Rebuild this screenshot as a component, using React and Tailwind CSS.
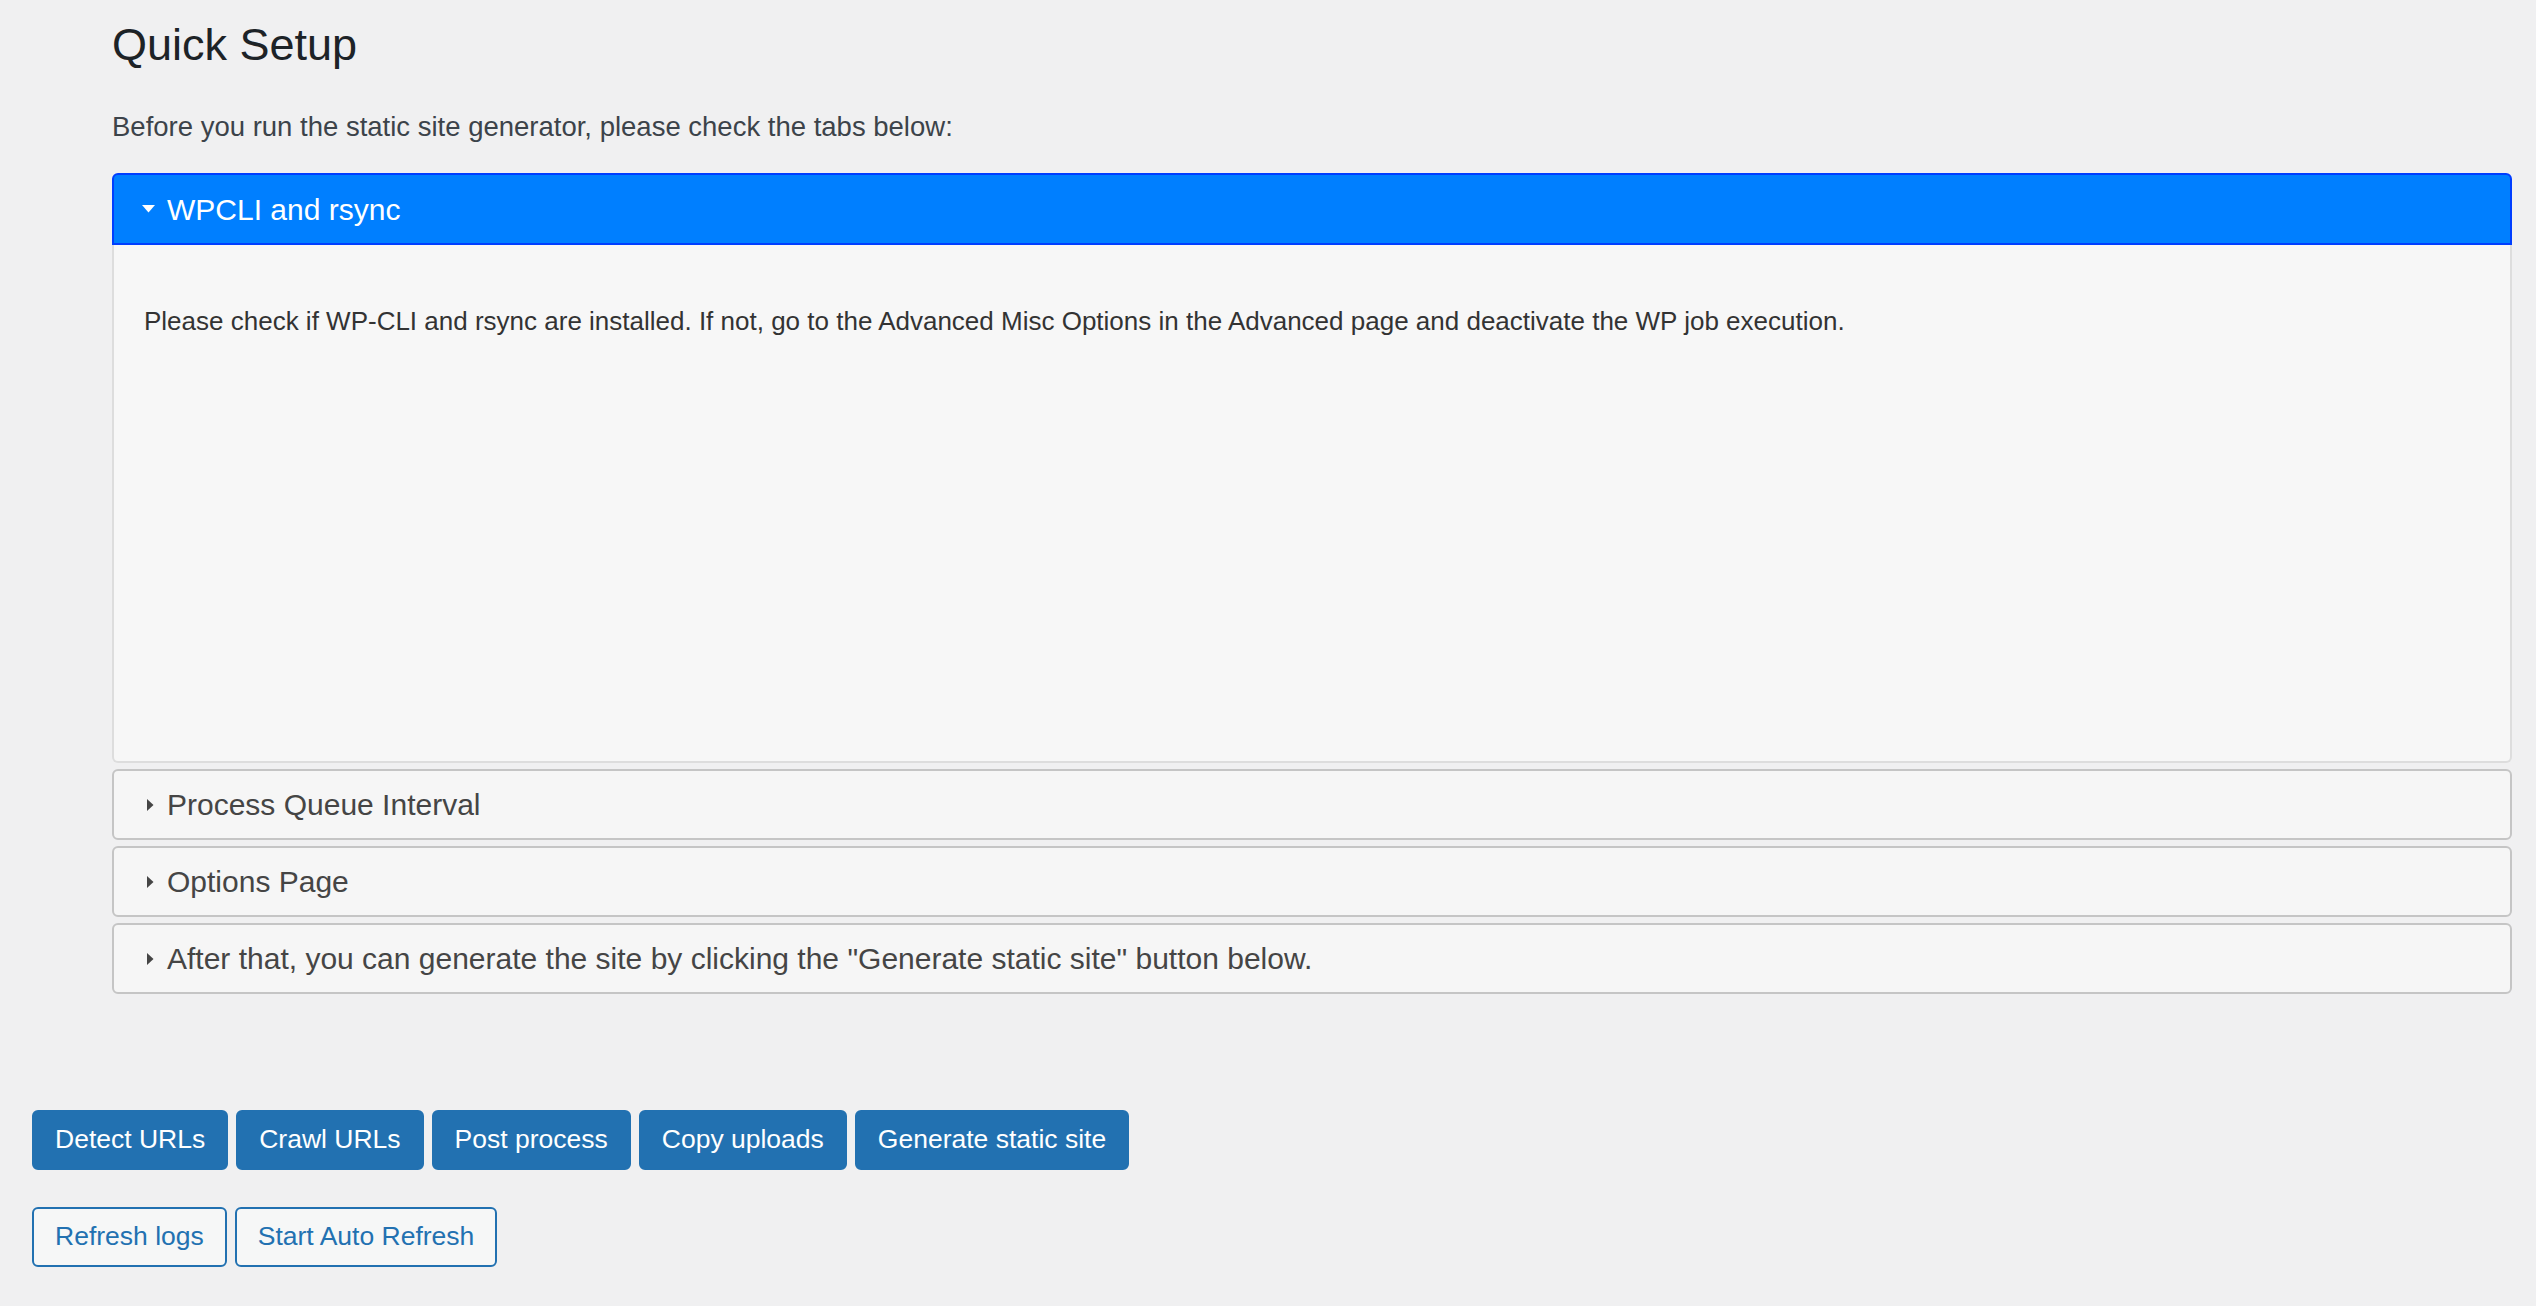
import React, { useState } from 'react';

const sections = [
  {
    id: 'wpcli',
    title: 'WPCLI and rsync',
    body: 'Please check if WP-CLI and rsync are installed. If not, go to the Advanced Misc Options in the Advanced page and deactivate the WP job execution.',
  },
  { id: 'queue', title: 'Process Queue Interval', body: '' },
  { id: 'options', title: 'Options Page', body: '' },
  {
    id: 'generate',
    title: 'After that, you can generate the site by clicking the "Generate static site" button below.',
    body: '',
  },
];

const Triangle = ({ open }) =>
  open ? (
    <svg width="13" height="8" viewBox="0 0 13 8" className="shrink-0">
      <path d="M0 0 L13 0 L6.5 7.5 Z" fill="#ffffff" />
    </svg>
  ) : (
    <svg width="7" height="12" viewBox="0 0 7 12" className="shrink-0">
      <path d="M0 0 L6.5 6 L0 12 Z" fill="#454545" />
    </svg>
  );

const App = () => {
  const [active, setActive] = useState('wpcli');

  return (
    <div className="min-h-screen bg-[#f0f0f1] font-['Liberation_Sans',Arial,sans-serif] pb-[40px]">
      <div className="pl-[112px] pr-[24px] pt-[16px]">
        <h1 className="text-[45px] leading-[58px] text-[#1d2327] font-normal">Quick Setup</h1>
        <p className="mt-[35px] text-[27.5px] leading-[36px] text-[#3c434a]">
          Before you run the static site generator, please check the tabs below:
        </p>

        {/* Accordion */}
        <div className="mt-[28px]">
          {sections.map((section, i) => {
            const open = active === section.id;
            return (
              <div key={section.id} className={i > 0 ? 'mt-[6px]' : ''}>
                <button
                  onClick={() => setActive(open ? null : section.id)}
                  className={`w-full flex items-center text-left text-[30px] border-2 ${
                    open
                      ? 'h-[72px] gap-[12px] pl-[28px] bg-[#007fff] border-[#003eff] text-white rounded-t-[6px]'
                      : 'h-[71px] gap-[13px] pl-[33px] bg-[#f6f6f6] border-[#c5c5c5] text-[#454545] rounded-[6px]'
                  }`}
                >
                  <Triangle open={open} />
                  <span>{section.title}</span>
                </button>
                {open && (
                  <div className="h-[518px] bg-[#f7f7f7] border-2 border-t-0 border-[#dddddd] rounded-b-[6px] pl-[30px] pt-[58px]">
                    <p className="text-[26px] leading-[36px] text-[#333333]">{section.body}</p>
                  </div>
                )}
              </div>
            );
          })}
        </div>
      </div>

      {/* Action buttons */}
      <div className="pl-[32px] mt-[116px] flex gap-[8px]">
        {['Detect URLs', 'Crawl URLs', 'Post process', 'Copy uploads', 'Generate static site'].map((label) => (
          <button
            key={label}
            className="h-[60px] px-[21px] rounded-[6px] bg-[#2271b1] text-white text-[26.5px] border-2 border-[#2271b1]"
          >
            {label}
          </button>
        ))}
      </div>
      <div className="pl-[32px] mt-[37px] flex gap-[8px]">
        {['Refresh logs', 'Start Auto Refresh'].map((label) => (
          <button
            key={label}
            className="h-[60px] px-[21px] rounded-[6px] bg-[#f6f7f7] text-[#2271b1] text-[26.5px] border-2 border-[#2271b1]"
          >
            {label}
          </button>
        ))}
      </div>
    </div>
  );
};

export default App;
